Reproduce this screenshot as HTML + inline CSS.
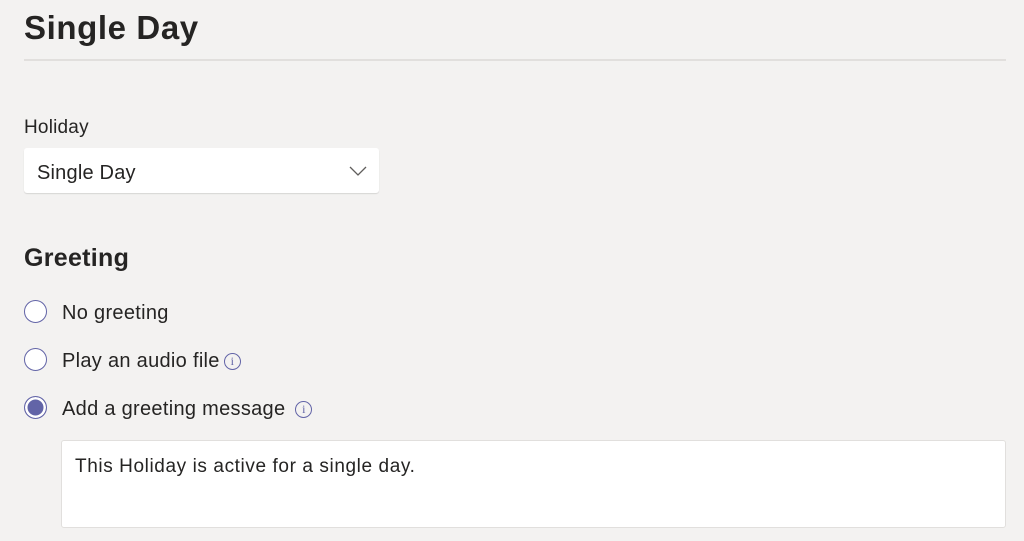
<html><head><style>
body{margin:0;background:#f3f2f1;font-family:"Liberation Sans",sans-serif;color:#252423;width:1024px;height:541px;overflow:hidden;position:relative}
.a{position:absolute;white-space:nowrap}
.r{position:absolute;left:24px;width:23px;height:23px;border:1.5px solid #6264a7;border-radius:50%;background:#fff;box-sizing:border-box}
.i{display:inline-block;width:17px;height:17px;border:1.3px solid #6264a7;border-radius:50%;box-sizing:border-box;color:#6264a7;font-size:12px;line-height:15px;text-align:center;vertical-align:2px;font-family:"Liberation Serif",serif;letter-spacing:0}
</style></head><body>
<div class="a" style="left:24px;top:9px;font-size:33px;font-weight:bold;letter-spacing:0.6px">Single Day</div>
<div class="a" style="left:24px;top:59px;width:982px;height:2px;background:#e1dfdd"></div>
<div class="a" style="left:24px;top:117px;font-size:19px;letter-spacing:0.2px">Holiday</div>
<div class="a" style="left:24px;top:148px;width:355px;height:45px;background:#fff;border-radius:3px;box-shadow:0 1px 1px rgba(0,0,0,.12)"></div>
<div class="a" style="left:37px;top:162px;font-size:20px;letter-spacing:0.2px">Single Day</div>
<svg class="a" style="left:348px;top:165px" width="20" height="12"><path d="M2 2l8 8 8-8" fill="none" stroke="#605e5c" stroke-width="1.3"/></svg>
<div class="a" style="left:24px;top:244px;font-size:25px;font-weight:bold;letter-spacing:0.3px">Greeting</div>
<div class="r" style="top:300px"></div>
<div class="a" style="left:62px;top:302px;font-size:20px;letter-spacing:0.3px">No greeting</div>
<div class="r" style="top:348px"></div>
<div class="a" style="left:62px;top:350px;font-size:20px;letter-spacing:0.3px">Play an audio file<span class="i" style="margin-left:4px">i</span></div>
<div class="r" style="top:396px;background:#6264a7;box-shadow:inset 0 0 0 2.5px #fff;border-color:#6264a7"></div>
<div class="a" style="left:62px;top:398px;font-size:20px;letter-spacing:0.3px">Add a greeting message <span class="i" style="margin-left:4px">i</span></div>
<div class="a" style="left:61px;top:440px;width:945px;height:88px;background:#fff;border:1px solid #e1dfdd;border-radius:3px;box-sizing:border-box"></div>
<div class="a" style="left:75px;top:456px;font-size:19px;letter-spacing:0.6px">This Holiday is active for a single day.</div>
</body></html>
